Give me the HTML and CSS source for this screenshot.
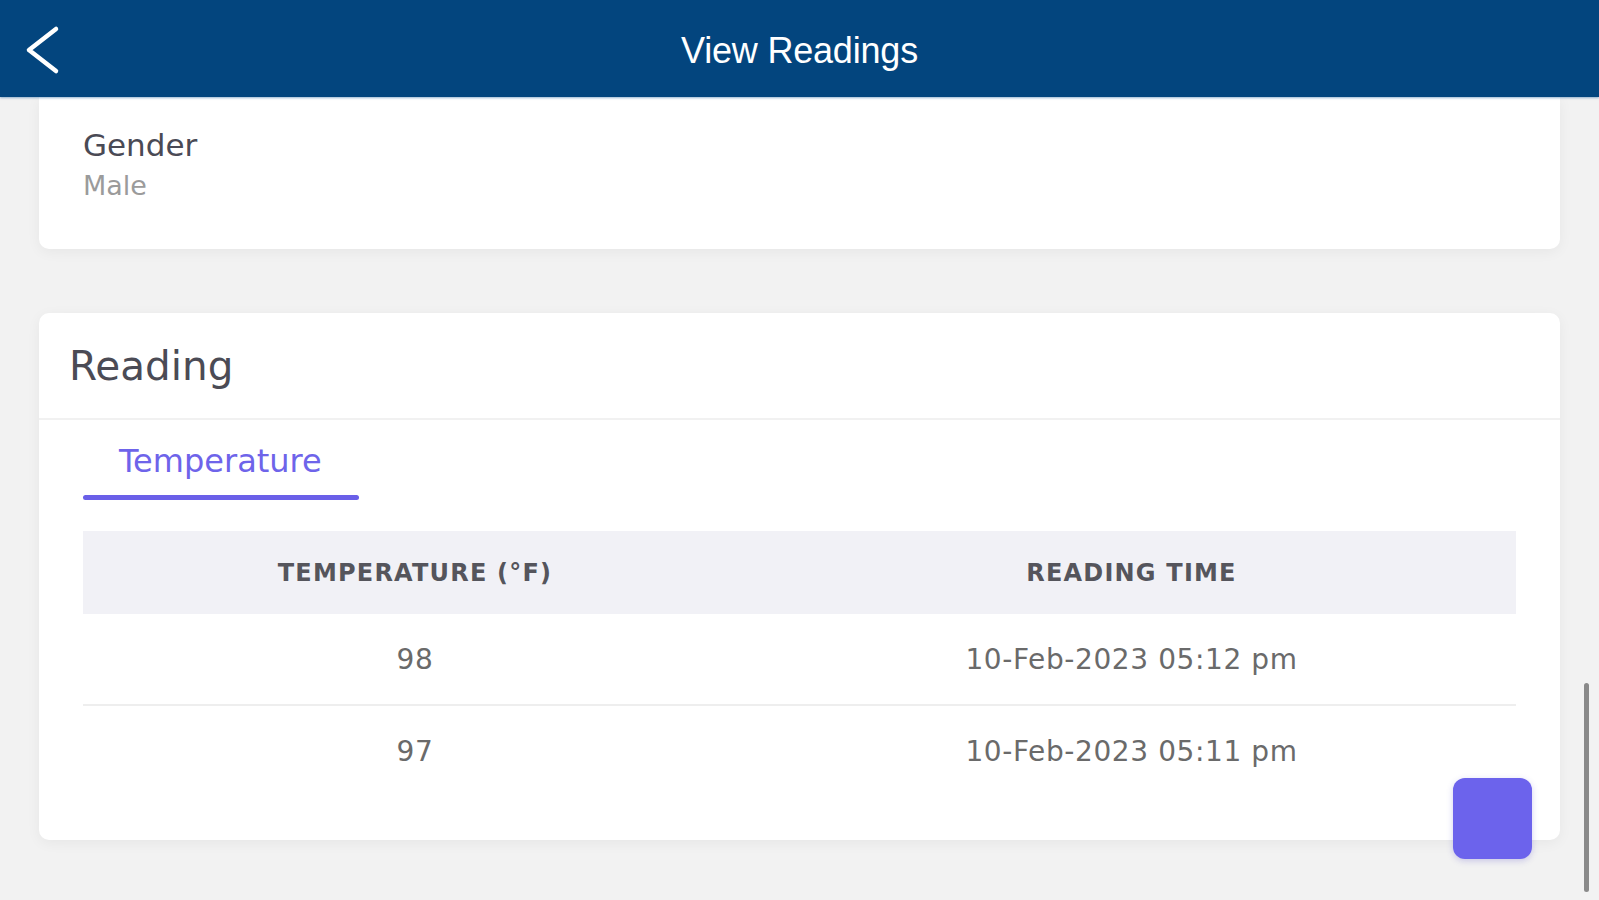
FILE: index.html
```html
<!DOCTYPE html>
<html lang="en">
<head>
<meta charset="utf-8">
<title>View Readings</title>
<link rel="stylesheet" href="styles.css">
</head>
<body>
<header class="topbar">
  <button class="back" aria-label="Back">
    <svg width="40" height="50" viewBox="0 0 40 50"><polyline points="32,4 5,25 32,46" fill="none" stroke="#fff" stroke-width="4.5" stroke-linecap="round" stroke-linejoin="round"/></svg>
  </button>
  <h1 class="title">View Readings</h1>
  <span class="spacer"></span>
</header>
<main class="content">
  <section class="card info-card">
    <div class="field-label">Gender</div>
    <div class="field-value">Male</div>
  </section>
  <section class="card reading-card">
    <div class="card-head">Reading</div>
    <div class="card-body">
      <div class="tabs"><div class="tab active"><span class="tab-label">Temperature</span></div></div>
      <table class="readings">
        <thead>
          <tr><th class="col-temp">TEMPERATURE (°F)</th><th>READING TIME</th></tr>
        </thead>
        <tbody>
          <tr><td>98</td><td>10-Feb-2023 05:12 pm</td></tr>
          <tr><td>97</td><td>10-Feb-2023 05:11 pm</td></tr>
        </tbody>
      </table>
    </div>
  </section>
</main>
<button class="fab" aria-label="Action"></button>
<div class="scroll-thumb"></div>
</body>
</html>
```
FILE: styles.css
```css
html, body {
  margin: 0;
  padding: 0;
}
body {
  background: #f2f2f2;
  font-family: "DejaVu Sans", "Open Sans", sans-serif;
  height: 900px;
  overflow: hidden;
}
.topbar {
  height: 97px;
  background: #03457e;
  display: grid;
  grid-template-columns: 1fr auto 1fr;
  align-items: center;
  box-shadow: 0 1px 2px rgba(80, 130, 180, 0.6);
  position: relative;
  z-index: 2;
}
.back {
  justify-self: start;
  margin-left: 24px;
  margin-top: 2px;
  background: none;
  border: 0;
  padding: 0;
  display: flex;
}
.title {
  margin: 4px 0 0;
  color: #fff;
  font-family: "Liberation Sans", Arial, sans-serif;
  font-weight: 400;
  font-size: 36px;
  letter-spacing: -0.2px;
}
.content {
  padding: 0 39px;
}
.card {
  background: #fff;
  border-radius: 10px;
  box-shadow: 0 3px 14px rgba(0, 0, 0, 0.05);
}
.info-card {
  border-radius: 0 0 10px 10px;
  padding: 30px 44px 48px;
}
.field-label {
  font-size: 31px;
  line-height: 36px;
  color: #4a4a55;
}
.field-value {
  margin-top: 8px;
  font-size: 27px;
  line-height: 30px;
  color: #9b9b9b;
}
.reading-card {
  margin-top: 64px;
  padding-bottom: 44px;
}
.card-head {
  height: 105px;
  display: flex;
  align-items: center;
  padding: 0 30px;
  font-size: 40.5px;
  color: #4b4b55;
  border-bottom: 2px solid #f1f1f1;
}
.card-body {
  padding: 0 44px;
}
.tabs {
  padding-top: 21px;
  display: flex;
}
.tab {
  display: block;
}
.tab-label {
  display: block;
  padding: 0 37px 0 36px;
  font-size: 32px;
  line-height: 40px;
  color: #6e64ea;
}
.tab.active::after {
  content: "";
  display: block;
  margin-top: 14px;
  height: 5px;
  border-radius: 3px;
  background: #6a5fe8;
}
.readings {
  margin-top: 31px;
  width: 100%;
  border-collapse: collapse;
}
.readings th {
  height: 83px;
  padding: 0;
  background: #f1f1f6;
  color: #55555c;
  font-size: 24px;
  font-weight: 700;
  letter-spacing: 1.2px;
  text-align: center;
}
.readings .col-temp {
  width: 664px;
}
.readings td {
  height: 90px;
  padding: 0;
  text-align: center;
  color: #6a6a6a;
  font-size: 28px;
  letter-spacing: 0.6px;
}
.readings tbody tr + tr td {
  border-top: 2px solid #eeeeee;
}
.fab {
  position: fixed;
  left: 1453px;
  top: 778px;
  width: 79px;
  height: 81px;
  border: 0;
  border-radius: 12px;
  background: #6c63ec;
  box-shadow: 0 2px 6px rgba(80, 70, 200, 0.25);
}
.scroll-thumb {
  position: fixed;
  left: 1584px;
  top: 683px;
  width: 5px;
  height: 209px;
  border-radius: 3px;
  background: #8a8a8a;
}
```
